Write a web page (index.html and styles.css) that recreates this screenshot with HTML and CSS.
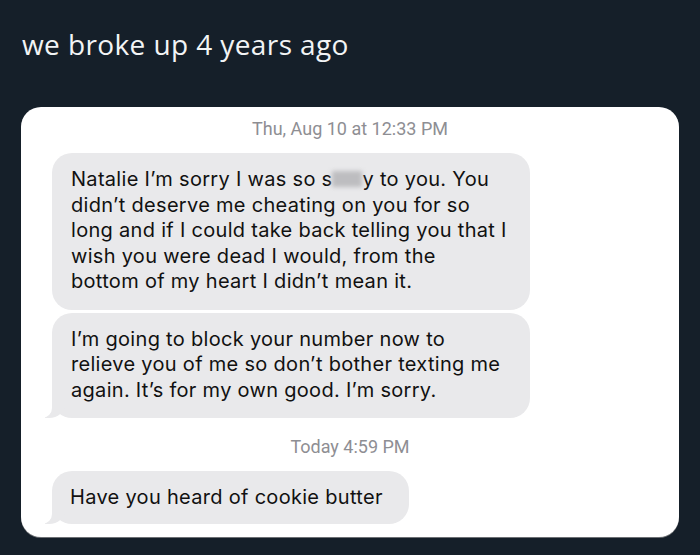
FILE: index.html
```html
<!DOCTYPE html>
<html lang="en">
<head>
<meta charset="utf-8">
<title>we broke up 4 years ago</title>
<link rel="stylesheet" href="styles.css">
</head>
<body>
  <main class="post">
    <h1 class="post-text">we broke up 4 years ago</h1>
    <section class="card">
      <div class="stamp">Thu, Aug 10 at 12:33 PM</div>
      <div class="thread">
        <div class="bubble">Natalie I’m sorry I was so s<span class="censor"></span>y to you. You<br>didn’t deserve me cheating on you for so<br>long and if I could take back telling you that I<br>wish you were dead I would, from the<br>bottom of my heart I didn’t mean it.</div>
        <div class="bubble tail">I’m going to block your number now to<br>relieve you of me so don’t bother texting me<br>again. It’s for my own good. I’m sorry.</div>
      </div>
      <div class="stamp stamp-today">Today 4:59 PM</div>
      <div class="thread">
        <div class="bubble tail short">Have you heard of cookie butter</div>
      </div>
    </section>
  </main>
</body>
</html>
```

FILE: styles.css
```css
html, body {
  margin: 0;
  padding: 0;
  background: #151f29;
}

.post {
  display: flex;
  flex-direction: column;
  height: 555px;
  box-sizing: border-box;
  padding: 0 21px 0 21px;
}

.post-text {
  margin: 0;
  padding: 29px 0 0 1px;
  height: 107px;
  box-sizing: border-box;
  font-family: "Open Sans", "Liberation Sans", sans-serif;
  font-weight: 400;
  font-size: 28px;
  line-height: 30px;
  color: #f2f4f5;
  letter-spacing: 0.4px;
}

.card {
  background: #ffffff;
  border-radius: 20px;
  padding: 12px 31px 13px 31px;
  box-shadow: 0 1px 0 #6d7074;
  display: flex;
  flex-direction: column;
}

.stamp {
  text-align: center;
  font-family: Roboto, "Liberation Sans", sans-serif;
  font-size: 18px;
  line-height: 20px;
  color: #8e8e93;
  margin-bottom: 14px;
}

.stamp-today {
  margin-top: 19px;
  margin-bottom: 14px;
}

.thread {
  display: flex;
  flex-direction: column;
  align-items: flex-start;
  gap: 3px;
}

.bubble {
  position: relative;
  background: #e9e9eb;
  color: #111111;
  font-family: Inter, "Liberation Sans", sans-serif;
  font-size: 20px;
  letter-spacing: 0.3px;
  line-height: 25.5px;
  padding: 14px 22px 15px 19px;
  border-radius: 20px;
  width: 437px;
}

.bubble.short {
  width: auto;
  padding: 14px 26px 13.5px 18px;
}

.bubble.tail::before {
  content: "";
  position: absolute;
  bottom: 0;
  left: -7px;
  width: 20px;
  height: 25px;
  background: #e9e9eb;
  border-bottom-right-radius: 16px 14px;
}

.bubble.tail::after {
  content: "";
  position: absolute;
  bottom: 0;
  left: -26px;
  width: 26px;
  height: 25px;
  background: #ffffff;
  border-bottom-right-radius: 10px;
}

.censor {
  display: inline-block;
  width: 30px;
  height: 16px;
  vertical-align: -1px;
  background: #bdbdc0;
  filter: blur(2px);
}
```
